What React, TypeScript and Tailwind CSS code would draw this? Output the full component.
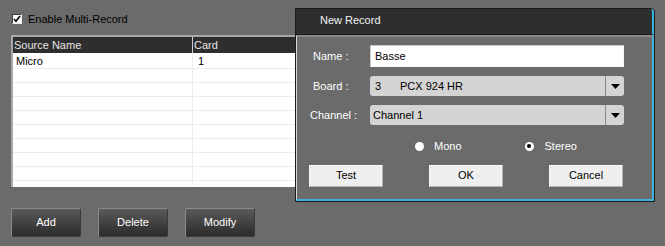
import React from "react";

const font = { fontFamily: '"Liberation Sans", Arial, sans-serif' };

const rows = [
    { name: "Micro", card: "1", h: "h-[16px]" },
    { name: "", card: "", h: "h-[14px]" },
    { name: "", card: "", h: "h-[14px]" },
    { name: "", card: "", h: "h-[14px]" },
    { name: "", card: "", h: "h-[14px]" },
    { name: "", card: "", h: "h-[14px]" },
    { name: "", card: "", h: "h-[14px]" },
    { name: "", card: "", h: "h-[14px]" },
    { name: "", card: "", h: "h-[14px]" },
];

const DarkButton = ({ label }: { label: string }) => (
    <button className="w-[70px] h-[29px] rounded-[2px] border border-[#8a8a8a] border-b-[#3a3a3a] border-r-[#3a3a3a] bg-gradient-to-b from-[#5a5a5a] to-[#2c2c2c] text-[11px] text-white">
        {label}
    </button>
);

const LightButton = ({ label }: { label: string }) => (
    <button className="w-[74px] h-[22px] border border-[#fafafa] border-b-[#b4b4b4] border-r-[#b4b4b4] bg-[#efefef] text-[11px] text-black">
        {label}
    </button>
);

const Select = ({ value, board }: { value: string; board?: string }) => (
    <div className="flex h-[20px] w-[254px] rounded-[3px] bg-[#d4d4d4] text-[11px] text-black">
        <div className="flex flex-1 items-center pl-[3px]">
            {board ? (
                <>
                    <span className="w-[27px] pl-[2px]">{value}</span>
                    <span>{board}</span>
                </>
            ) : (
                value
            )}
        </div>
        <div className="flex w-[19px] items-center justify-center border-l border-[#8c8c8c]">
            <svg width="9" height="5" viewBox="0 0 9 5">
                <path d="M0 0h9L4.5 5z" fill="#000" />
            </svg>
        </div>
    </div>
);

export default function App() {
    return (
        <div
            className="relative h-[246px] w-[665px] overflow-hidden bg-[#6b6b6b]"
            style={font}
        >
            <div className="flex flex-col pl-[11px] pt-[11px]">
                <label className="flex items-center gap-[6px] pl-[1px] text-[11px] text-black">
                    <span className="flex h-[10px] w-[10px] items-center justify-center border border-[#404040] border-b-[#f0f0f0] border-r-[#f0f0f0] bg-white">
                        <svg width="8" height="8" viewBox="0 0 8 8">
                            <path
                                d="M1 4l2 2.2L7 1"
                                stroke="#000"
                                strokeWidth="1.6"
                                fill="none"
                            />
                        </svg>
                    </span>
                    Enable Multi-Record
                </label>

                <div className="mt-[7px] w-[360px] border-l-2 border-t-2 border-[#a8a8a8] bg-white">
                    <div className="flex h-[16px] bg-[#2e2e2e] text-[11px] leading-[16px] text-[#e6e6e6]">
                        <div className="w-[180px] border-r border-[#cfcfcf] pl-[1px]">
                            Source Name
                        </div>
                        <div className="flex-1 pl-[1px]">Card</div>
                    </div>
                    {rows.map((r, i) => (
                        <div
                            key={i}
                            className={`flex ${r.h} border-b border-[#ececec] text-[11px] leading-[16px] text-black`}
                        >
                            <div className="w-[180px] border-r border-[#ececec] pl-[3px]">
                                {r.name}
                            </div>
                            <div className="flex-1 pl-[5px]">{r.card}</div>
                        </div>
                    ))}
                    <div className="flex h-[6px] border-b-2 border-white">
                        <div className="w-[180px] border-r border-[#ececec]"></div>
                    </div>
                </div>

                <div className="mt-[21px] flex gap-[17px]">
                    <DarkButton label="Add" />
                    <DarkButton label="Delete" />
                    <DarkButton label="Modify" />
                </div>
            </div>

            {/* dialog window over the list */}
            <div className="absolute left-[295px] top-[8px] w-[360px] rounded-tr-[4px] border border-[#1a1a1a] bg-[#6b6b6b]">
                <div className="rounded-tr-[3px] border-b border-r-2 border-b-[#1a1a1a] border-r-[#3ab4dc] bg-[#2e2e2e] pt-[2px]">
                    <div className="h-[23px] pl-[24px] text-[11px] leading-[18px] text-[#f2f2f2]">
                        New Record
                    </div>
                </div>
                <div className="border-b-2 border-l border-r-2 border-t-2 border-b-[#3ab4dc] border-l-[#d8d8d8] border-r-[#3ab4dc] border-t-[#8a8a8a] pb-[12px]">
                    <div className="flex flex-col gap-[9px] pt-[8px]">
                        <div className="flex items-center">
                            <span className="w-[73px] pl-[16px] text-[11px] text-white">
                                Name :
                            </span>
                            <div className="flex h-[22px] w-[254px] items-center border border-[#f4f4f4] border-l-[#c8c8c8] border-t-[#c8c8c8] bg-white pl-[4px] text-[11px] text-black">
                                Basse
                            </div>
                        </div>
                        <div className="flex items-center">
                            <span className="w-[73px] pl-[16px] text-[11px] text-white">
                                Board :
                            </span>
                            <Select value="3" board="PCX 924 HR" />
                        </div>
                        <div className="flex items-center">
                            <span className="w-[73px] pl-[13px] text-[11px] text-white">
                                Channel :
                            </span>
                            <Select value="Channel 1" />
                        </div>
                    </div>

                    <div className="mt-[13px] flex items-center pl-[118px] text-[11px] text-white">
                        <span className="h-[9px] w-[9px] rounded-full bg-white"></span>
                        <span className="ml-[10px]">Mono</span>
                        <span className="ml-[63px] flex h-[9px] w-[9px] items-center justify-center rounded-full bg-white">
                            <span className="h-[4px] w-[4px] rounded-full bg-black"></span>
                        </span>
                        <span className="ml-[11px]">Stereo</span>
                    </div>

                    <div className="mt-[10px] flex gap-[46px] pl-[12px]">
                        <LightButton label="Test" />
                        <LightButton label="OK" />
                        <LightButton label="Cancel" />
                    </div>
                </div>
            </div>
        </div>
    );
}
